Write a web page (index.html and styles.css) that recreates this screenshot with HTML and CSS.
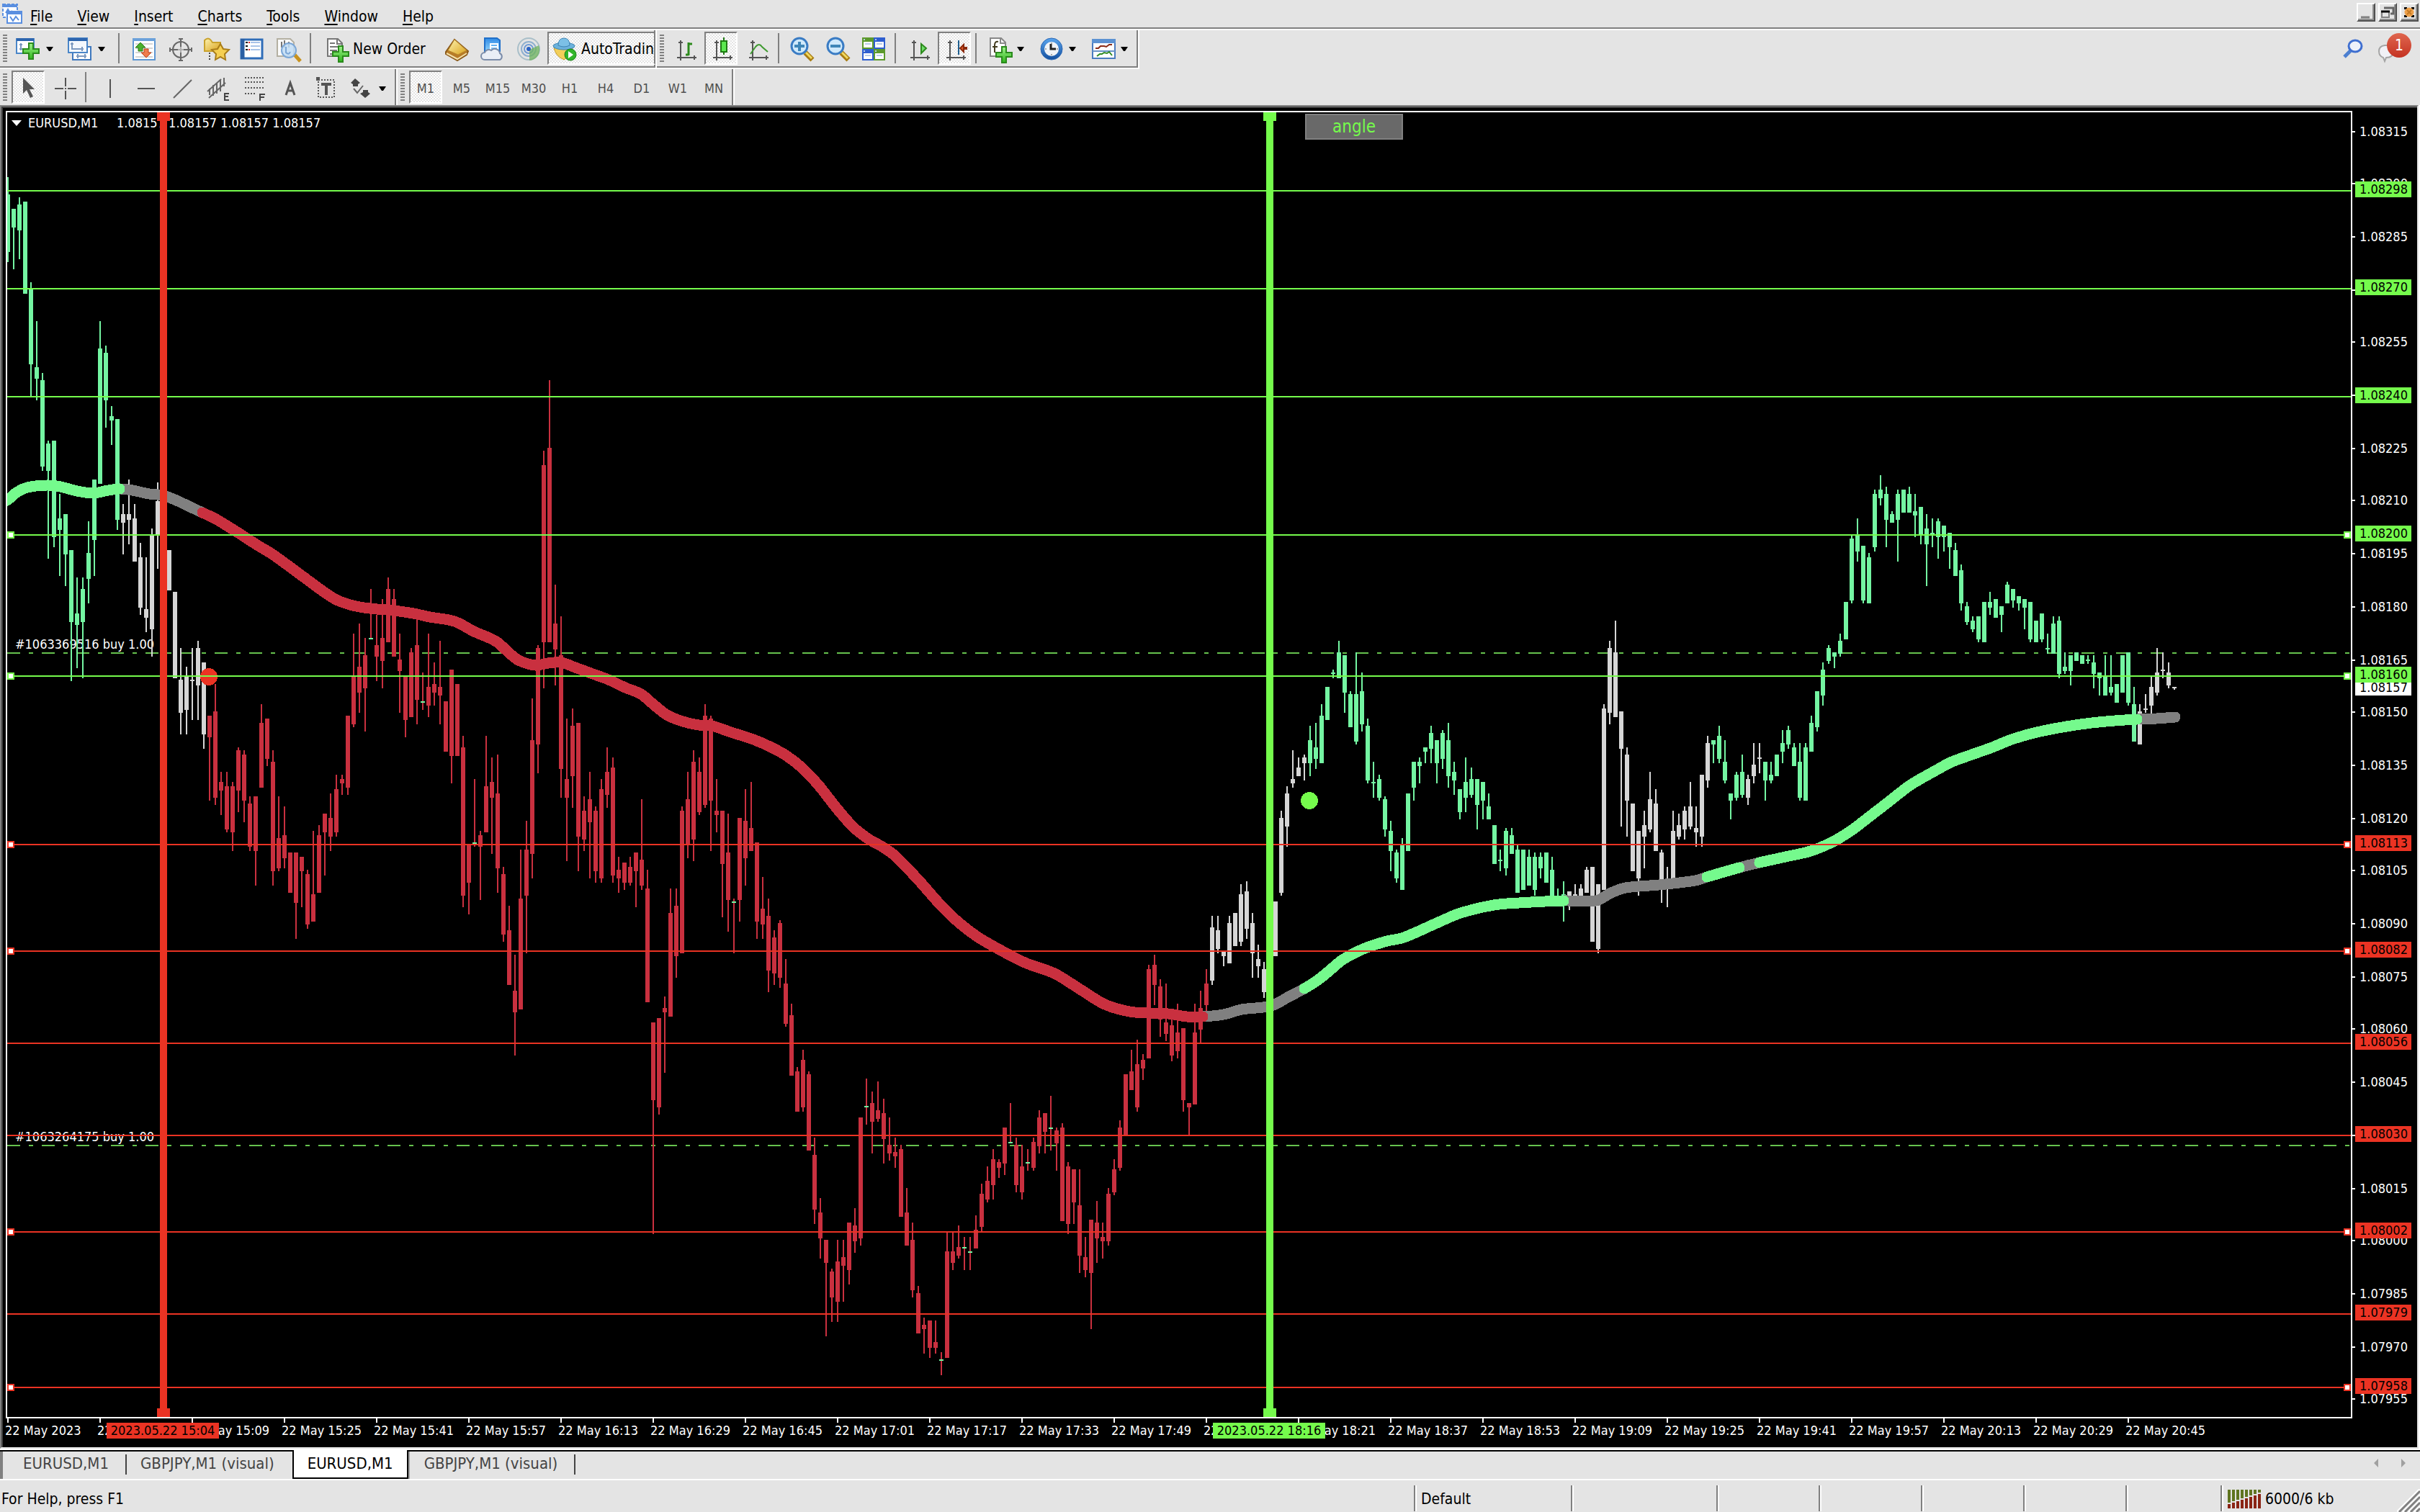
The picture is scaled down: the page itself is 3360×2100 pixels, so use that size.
FILE: index.html
```html
<!DOCTYPE html>
<html lang="en">
<head>
<meta charset="utf-8">
<title>EURUSD,M1</title>
<link rel="stylesheet" href="styles.css">
</head>
<body>
<svg class="defs" aria-hidden="true">
  <defs>
    <linearGradient id="plus" x1="0" y1="0" x2="0" y2="1"><stop offset="0" stop-color="#9df28a"/><stop offset="1" stop-color="#2fb51c"/></linearGradient>
    <linearGradient id="gold" x1="0" y1="0" x2="1" y2="1"><stop offset="0" stop-color="#fdf3b0"/><stop offset="1" stop-color="#d9a21c"/></linearGradient>
    <linearGradient id="sky" x1="0" y1="0" x2="0" y2="1"><stop offset="0" stop-color="#2f8ae6"/><stop offset="1" stop-color="#8fd3fb"/></linearGradient>
    <linearGradient id="clock" x1="0" y1="0" x2="0" y2="1"><stop offset="0" stop-color="#5aa5ee"/><stop offset="1" stop-color="#134f9f"/></linearGradient>
    <g id="axes" fill="none" stroke="#555" stroke-width="2"><path d="M10 4V32M5 28H32M7 7h6M29 25v6"/></g>
    <path id="green-plus" d="M18 6h6v8h8v6h-8v8h-6v-8h-8v-6h8z" fill="url(#plus)" stroke="#2a8a1c" stroke-width="2"/>
  </defs>
</svg>

<header class="menubar">
  <svg class="app-icon" viewBox="0 0 30 30" aria-hidden="true">
    <path d="M2 2h20v18H2z" fill="#fff" stroke="#5a8fe0" stroke-width="2" stroke-dasharray="4 2"/>
    <path d="M2 4h20" stroke="#5a8fe0" stroke-width="4"/><path d="M6 14l3-5 3 5 3-3" fill="none" stroke="#5a8fe0" stroke-width="2"/>
    <path d="M8 12h20v16H8z" fill="#fff" stroke="#5a8fe0" stroke-width="2"/><path d="M8 14h20" stroke="#5a8fe0" stroke-width="4"/>
    <path d="M12 19l4 6 4-6 4 5" fill="none" stroke="#5a8fe0" stroke-width="2"/>
  </svg>
  <nav class="menus">
    <button type="button"><u>F</u>ile</button><button type="button"><u>V</u>iew</button><button type="button"><u>I</u>nsert</button><button type="button"><u>C</u>harts</button><button type="button"><u>T</u>ools</button><button type="button"><u>W</u>indow</button><button type="button"><u>H</u>elp</button>
  </nav>
  <div class="window-buttons">
    <button type="button" aria-label="Minimize"><svg viewBox="0 0 22 22"><path d="M4 18h12" stroke="#808080" stroke-width="3"/></svg></button>
    <button type="button" aria-label="Restore"><svg viewBox="0 0 22 22"><path d="M6 5h13v8h-4" fill="none" stroke="#666" stroke-width="3"/><path d="M3 10h10v8H3z" fill="none" stroke="#808080" stroke-width="2"/><path d="M2 10h12" stroke="#000" stroke-width="3"/></svg></button>
    <button type="button" aria-label="Close"><svg viewBox="0 0 22 22"><path d="M4 4h4v3H4zM14 4h4v3h-4zM4 15h4v3H4zM14 15h4v3h-4z"/><circle cx="11" cy="11" r="6.500" fill="#eda04a"/><path d="M8 8l6 6M14 8l-6 6" stroke="#c57a24" stroke-width="2"/></svg></button>
  </div>
</header>

<div class="toolbar">
  <div class="group">
    <span class="grip"></span>
    <button type="button" class="tool drop" aria-label="New chart">
      <svg viewBox="0 0 32 32"><path d="M1 2h24v20H1z" fill="#fff" stroke="#4a86c8" stroke-width="2"/><path d="M1 3h24" stroke="#2d65ae" stroke-width="4"/><path d="M7 8v10M5 10h4M5 16h16" stroke="#7d9ac0" stroke-width="2"/><use href="#green-plus" y="2"/></svg><i></i>
    </button>
    <button type="button" class="tool drop" aria-label="Profiles">
      <svg viewBox="0 0 32 32"><path d="M7 13h25v18H7z" fill="#fff" stroke="#3f78bd" stroke-width="2"/><path d="M12 26h14M14 23v6M24 23v6" stroke="#7d9ac0" stroke-width="2"/><path d="M1 1h26v20H1z" fill="#f4f8fd" stroke="#4a86c8" stroke-width="2"/><path d="M1 3h26" stroke="#2d65ae" stroke-width="4"/><path d="M6 7v10M4 9h4M6 16h16M20 13v6" stroke="#7d9ac0" stroke-width="2"/></svg><i></i>
    </button>
    <span class="sep sep-wide"></span>
    <button type="button" class="tool" aria-label="Market Watch">
      <svg viewBox="0 0 32 32"><path d="M2 2h30v29H2z" fill="#fff" stroke="#5d96d2" stroke-width="2"/><path d="M1 3h32" stroke="#6ba1da" stroke-width="4"/><path d="M5 9h24M5 15h24M5 21h24M5 27h24" stroke="#d5d5d5" stroke-width="2"/><path d="M12 7l7 7h-4v5H9v-5H5z" fill="#4ab02e" stroke="#2a7d16"/><path d="M20 28l-7-7h4v-5h6v5h4z" fill="#ef7c4c" stroke="#bd4218"/></svg>
    </button>
    <button type="button" class="tool" aria-label="Data Window">
      <svg viewBox="0 0 32 32"><g fill="none" stroke="#686868" stroke-width="2"><circle cx="18" cy="17" r="11"/><path d="M18 2v11M18 21v11M3 17h11M22 17h11M15 2h6M15 32h6M3 14v6M33 14v6" /><path d="M18 13v8M14 17h8" stroke="#b0b0b0"/></g></svg>
    </button>
    <button type="button" class="tool" aria-label="Navigator">
      <svg viewBox="0 0 32 32"><path d="M1 4q5-5 9 0l2 3h11v12H1z" fill="url(#gold)" stroke="#c9a22c" stroke-width="2"/><path d="M8 21v10" stroke="#444" stroke-width="2" stroke-dasharray="2 2"/><path d="M23 9l4 7 8 1-6 6 1 8-7-4-7 4 1-8-6-6 8-1z" fill="#f5cf52" stroke="#a87c1a" stroke-width="2"/></svg>
    </button>
    <button type="button" class="tool" aria-label="Terminal">
      <svg viewBox="0 0 32 32"><path d="M2 3h29v26H2z" fill="#fff" stroke="#2f6db8" stroke-width="3"/><path d="M4 2v28" stroke="#2b5ea2" stroke-width="5"/><path d="M8 7h3M8 12h3M8 17h3" stroke="#111" stroke-width="2"/><path d="M12 7h2M12 17h2" stroke="#d22" stroke-width="2"/><path d="M15 7h13M15 12h13M15 17h13" stroke="#a8c3e8" stroke-width="2"/></svg>
    </button>
    <button type="button" class="tool" aria-label="Strategy Tester">
      <svg viewBox="0 0 32 32"><path d="M2 2h18l5 5v19H2z" fill="#fafafa" stroke="#b4b0a2" stroke-width="2"/><path d="M8 6v8M12 4v10M18 6v8" stroke="#777" stroke-width="2"/><path d="M26 24l8 9" stroke="#c8921e" stroke-width="5"/><circle cx="18" cy="18" r="10" fill="#bfdcf5" fill-opacity=".85" stroke="#7ba6d6" stroke-width="2"/><path d="M14 13v8q4 4 6-1" fill="none" stroke="#7ba6d6" stroke-width="2"/></svg>
    </button>
    <span class="sep sep-wide"></span>
    <button type="button" class="tool text order">
      <svg viewBox="0 0 32 32"><path d="M3 2h14l6 6v18H3z" fill="#fff" stroke="#777" stroke-width="2"/><path d="M16 2v7h7" fill="none" stroke="#777" stroke-width="2"/><path d="M6 8h7M6 13h12M6 18h10M6 23h8" stroke="#777" stroke-width="2"/><use href="#green-plus" y="6"/></svg>New Order
    </button>
    <button type="button" class="tool" aria-label="MetaEditor">
      <svg viewBox="0 0 32 32"><path d="M2 20L14 3l19 16-2 5-13 8L2 23z" fill="#b77b26" stroke="#8a5a1a" stroke-width="2"/><path d="M14 3l17 15-12 6L5 18z" fill="url(#gold)" stroke="#b8862a"/><path d="M3 22l15 8 13-8" fill="none" stroke="#f3dfa8" stroke-width="2"/></svg>
    </button>
    <button type="button" class="tool" aria-label="Virtual hosting">
      <svg viewBox="0 0 32 32"><path d="M6 1h17l4 3v15H6z" fill="url(#sky)" stroke="#1f6fc9" stroke-width="2"/><path d="M14 9h10v12H14zM14 13h10" fill="none" stroke="#fff" stroke-width="2"/><path d="M6 31a5 5 0 0 1 0-10 6 6 0 0 1 9-3 7 7 0 0 1 12 4 5 5 0 0 1 0 9z" fill="#e9eef6" stroke="#7b8ca9" stroke-width="2"/></svg>
    </button>
    <button type="button" class="tool" aria-label="Signals">
      <svg viewBox="0 0 32 32"><g fill="none" stroke-width="2"><circle cx="17" cy="16" r="15" stroke="#a9bfc9"/><circle cx="17" cy="16" r="10" stroke="#8fb0cf"/><circle cx="17" cy="16" r="6" stroke="#6f9bd4"/></g><path d="M18 17l13-6a15 15 0 0 1-13 21z" fill="#6db35c" fill-opacity=".75"/><circle cx="17" cy="16" r="3" fill="#2c62c4"/></svg>
    </button>
    <button type="button" class="tool text auto pressed">
      <svg viewBox="0 0 32 32"><path d="M2 14h26q-1 11-12 17Q4 26 2 14z" fill="#f2cf5a" stroke="#c49a2a"/><ellipse cx="16" cy="12" rx="15" ry="5" fill="#6cb2dc" stroke="#3d83b3"/><path d="M8 11q0-10 8-10t8 10q-8 4-16 0z" fill="#7cc0e6" stroke="#3d83b3"/><circle cx="25" cy="24" r="8" fill="#31b52a" stroke="#1c8317"/><path d="M22 19l7 5-7 5z" fill="#fff"/></svg>AutoTrading
    </button>
  </div>
  <div class="group">
    <span class="grip"></span>
    <button type="button" class="tool" aria-label="Bar Chart"><svg viewBox="0 0 32 32"><use href="#axes"/><path d="M21 7v18M21 9h5M17 24h4" fill="none" stroke="#2c8a1c" stroke-width="3"/></svg></button>
    <button type="button" class="tool pressed" aria-label="Candlesticks"><svg viewBox="0 0 32 32"><use href="#axes"/><path d="M20 0v24" stroke="#1e7a12" stroke-width="2"/><path d="M16 5h8v15h-8z" fill="#5ce850" stroke="#1e7a12" stroke-width="2"/></svg></button>
    <button type="button" class="tool" aria-label="Line Chart"><svg viewBox="0 0 32 32"><use href="#axes"/><path d="M7 23L14 13Q19 7 23 13l8 7" fill="none" stroke="#3f9a30" stroke-width="2"/></svg></button>
    <span class="sep"></span>
    <button type="button" class="tool" aria-label="Zoom In"><svg viewBox="0 0 32 32"><path d="M21 21l10 10" stroke="#a87c12" stroke-width="7"/><path d="M22 21l8 8" stroke="#f0d860" stroke-width="3"/><circle cx="13" cy="12" r="11" fill="#cfe9fb" stroke="#3a7cc4" stroke-width="3"/><path d="M13 6v13M6 12h14" stroke="#3f86b8" stroke-width="4"/></svg></button>
    <button type="button" class="tool" aria-label="Zoom Out"><svg viewBox="0 0 32 32"><path d="M21 21l10 10" stroke="#a87c12" stroke-width="7"/><path d="M22 21l8 8" stroke="#f0d860" stroke-width="3"/><circle cx="13" cy="12" r="11" fill="#cfe9fb" stroke="#3a7cc4" stroke-width="3"/><path d="M6 12h14" stroke="#3f86b8" stroke-width="4"/></svg></button>
    <button type="button" class="tool" aria-label="Tile Windows"><svg viewBox="0 0 32 32"><path d="M0 0h16v16H0zM16 16h16v16H16z" fill="#5c9a2c"/><path d="M16 0h16v16H16zM0 16h16v16H0z" fill="#2f5fd0"/><path d="M2 6h12v8H2zM18 6h12v8H18zM2 22h12v8H2zM18 22h12v8H18z" fill="#fff"/><path d="M4 9h8M20 9h8M4 25h8M20 25h8M2 3h2M18 3h2M2 19h2M18 19h2" stroke="#b9cce8" stroke-width="2"/></svg></button>
    <span class="sep"></span>
    <button type="button" class="tool" aria-label="Auto Scroll"><svg viewBox="0 0 32 32"><use href="#axes"/><path d="M20 9l7 6-7 7z" fill="#6fdc6a" stroke="#2c8a1c" stroke-width="2"/></svg></button>
    <button type="button" class="tool pressed" aria-label="Chart Shift"><svg viewBox="0 0 32 32"><use href="#axes"/><path d="M22 4v20" stroke="#1f5f8f" stroke-width="2"/><path d="M24 15l5-5v4h4v2h-4v4z" fill="#e05a2a" stroke="#8a2a0c" stroke-width="2"/></svg></button>
    <span class="sep"></span>
    <button type="button" class="tool drop" aria-label="Indicators"><svg viewBox="0 0 32 32"><path d="M5 1h15l6 6v19H5z" fill="#fff" stroke="#888" stroke-width="2"/><path d="M19 1v7h7" fill="none" stroke="#888" stroke-width="2"/><path d="M16 6q-5-1-5 5v10M8 13h7" fill="none" stroke="#443c20" stroke-width="2"/><use href="#green-plus" x="3" y="7"/></svg><i></i></button>
    <button type="button" class="tool drop" aria-label="Periods"><svg viewBox="0 0 32 32"><circle cx="18" cy="16" r="15" fill="url(#clock)" stroke="#2a67b4"/><circle cx="18" cy="16" r="10" fill="#f0f3f7"/><path d="M17 9v7h7" fill="none" stroke="#222" stroke-width="3"/><path d="M18 7v2M18 23v2M9 16h2M25 16h2" stroke="#aaa" stroke-width="2"/></svg><i></i></button>
    <button type="button" class="tool drop" aria-label="Templates"><svg viewBox="0 0 32 32"><path d="M3 3h31v26H3z" fill="#fff" stroke="#4a7cc0" stroke-width="2"/><path d="M2 5h33" stroke="#5c92d2" stroke-width="6"/><path d="M3 19h31" stroke="#6b94c8" stroke-width="2"/><path d="M7 15h4l3-3h5l3 1 4-3h4" fill="none" stroke="#8a2a16" stroke-width="2"/><path d="M9 26l4-3h3l3-2 4 1 3-2 4 5" fill="none" stroke="#2f8a22" stroke-width="2"/></svg><i></i></button>
  </div>
  <div class="right-tools">
    <button type="button" aria-label="Search"><svg class="search" viewBox="0 0 28 28"><path d="M12 16L3 25" stroke="#4c7fd0" stroke-width="5"/><ellipse cx="18" cy="10" rx="9" ry="8" fill="#eef1fa" stroke="#3f6fd0" stroke-width="3"/></svg></button>
    <button type="button" class="notice" aria-label="Notifications"><svg viewBox="0 0 26 26"><path d="M9 2q12-1 12 8t-10 9l-2 5-2-5Q1 17 1 10t8-8z" fill="#f1f1f6" stroke="#a5a5a5" stroke-width="2"/></svg><span>1</span></button>
  </div>
</div>

<div class="toolbar second">
  <div class="group">
    <span class="grip"></span>
    <button type="button" class="tool pressed" aria-label="Cursor"><svg viewBox="0 0 32 32"><path d="M9 1v22l5-5 5 11 4-2-5-10h7z" fill="#555"/></svg></button>
    <button type="button" class="tool" aria-label="Crosshair"><svg viewBox="0 0 32 32"><path d="M18 1v12M18 19v12M3 16h12M21 16h12M17 16h2" stroke="#555" stroke-width="2"/></svg></button>
    <span class="sep"></span>
    <button type="button" class="tool" aria-label="Vertical Line"><svg viewBox="0 0 32 32"><path d="M18 3v26" stroke="#555" stroke-width="2"/></svg></button>
    <button type="button" class="tool" aria-label="Horizontal Line"><svg viewBox="0 0 32 32"><path d="M6 16h24" stroke="#555" stroke-width="2"/></svg></button>
    <button type="button" class="tool" aria-label="Trendline"><svg viewBox="0 0 32 32"><path d="M6 29L31 4" stroke="#666" stroke-width="2"/></svg></button>
    <button type="button" class="tool" aria-label="Equidistant Channel"><svg viewBox="0 0 32 32"><path d="M3 20L22 3M5 29L28 8M6 16v9M11 11v15M16 8v15M21 4v16M26 1v12" fill="none" stroke="#666" stroke-width="2"/><path d="M33 23h-6v9h6M27 27h5" fill="none" stroke="#444" stroke-width="2"/></svg></button>
    <button type="button" class="tool" aria-label="Fibonacci Retracement"><svg viewBox="0 0 32 32"><path d="M5 1h27M5 7h27M5 15h27M5 23h15" stroke="#555" stroke-width="2" stroke-dasharray="2 2"/><path d="M26 33v-9h7M26 28h6" fill="none" stroke="#444" stroke-width="2"/></svg></button>
    <button type="button" class="tool" aria-label="Text"><svg viewBox="0 0 32 32"><path d="M12 25l6-17 6 17M14 19h8" fill="none" stroke="#555" stroke-width="3"/></svg></button>
    <button type="button" class="tool" aria-label="Text Label"><svg viewBox="0 0 32 32"><path d="M7 4h22v24H7z" fill="none" stroke="#555" stroke-width="2" stroke-dasharray="2 2"/><path d="M4 0h5v5H4z" fill="#555"/><path d="M11 10h14M18 10v15" stroke="#555" stroke-width="4"/></svg></button>
    <button type="button" class="tool drop" aria-label="Arrows"><svg viewBox="0 0 32 32"><path d="M9 2l7 6-3 2v3H6v-3L3 8zM23 29l7-6-3-2v-3h-7v3l-4 2z" fill="#444"/><path d="M7 16l5 6 8-10" fill="none" stroke="#666" stroke-width="2"/></svg><i></i></button>
  </div>
  <div class="group periods">
    <span class="grip"></span>
    <button type="button" class="tool pressed">M1</button><button type="button" class="tool">M5</button><button type="button" class="tool">M15</button><button type="button" class="tool">M30</button><button type="button" class="tool">H1</button><button type="button" class="tool">H4</button><button type="button" class="tool">D1</button><button type="button" class="tool">W1</button><button type="button" class="tool">MN</button>
  </div>
</div>

<main class="chart">
  <section class="plot">
    <p class="order-label" data-y="895">#1063369516 buy 1.00</p>
    <p class="order-label" data-y="1579">#1063264175 buy 1.00</p>
    <p class="symbol"><i></i><b>EURUSD,M1</b>1.08157 1.08157 1.08157 1.08157</p>
    <svg id="bars" viewBox="10 156 3254 1812" preserveAspectRatio="none" role="img" aria-label="EURUSD one minute candlesticks"></svg>
    <button type="button" class="angle">angle</button>
  </section>
  <aside id="prices" class="prices"></aside>
  <footer id="times" class="times"></footer>
</main>

<nav class="tabs">
  <button type="button">EURUSD,M1</button><button type="button">GBPJPY,M1 (visual)</button><button type="button" class="active">EURUSD,M1</button><button type="button">GBPJPY,M1 (visual)</button>
  <span class="scroll"><svg viewBox="0 0 44 12"><path d="M6 0v12L0 6zM38 0v12l6-6z" fill="#a0a0a0"/></svg></span>
</nav>

<footer class="status">
  <span class="help">For Help, press F1</span>
  <span class="cell profile">Default</span>
  <span class="cell open"></span>
  <span class="cell small"></span><span class="cell small"></span><span class="cell small"></span><span class="cell small"></span><span class="cell volume"></span>
  <span class="cell traffic"><svg viewBox="0 0 46 26"><path d="M2 0v18M8 0v16M14 0v14M20 0v12M26 0v10M32 0v8M38 0v6M44 0v4" stroke="#5f7420" stroke-width="4"/><path d="M2 20v6M8 18v8M14 16v10M20 14v12M26 12v14M32 10v16M38 8v18M44 6v20" stroke="#8a2414" stroke-width="4"/></svg>6000/6 kb</span>
  <svg class="size-grip" viewBox="0 0 32 32"><path d="M0 32L32 0M8 32L32 8M16 32L32 16M24 32l8-8" stroke="#fff" stroke-width="3"/><path d="M3 32L32 3M11 32l21-21M19 32l13-13M27 32l5-5" stroke="#808080" stroke-width="3"/></svg>
</footer>
<script src="chart.js"></script>
</body>
</html>
```
FILE: styles.css
```css
* { box-sizing: border-box; }
html, body { height: 100%; margin: 0; }
body {
  display: flex;
  flex-direction: column;
  background: #e4e4e4;
  color: #000;
  font-family: "DejaVu Sans Condensed", "DejaVu Sans", "Noto Sans", sans-serif;
  font-size: 21px;
  line-height: 26px;
  overflow: hidden;
}
button {
  margin: 0;
  padding: 0;
  border: 0;
  background: none;
  color: inherit;
  font: inherit;
}
p { margin: 0; }
svg { display: block; overflow: visible; }
.defs { position: absolute; width: 0; height: 0; }

/* Menu bar */
.menubar {
  display: flex;
  flex: none;
  height: 42px;
  padding: 4px 2px 0;
  border-bottom: 2px solid #fff;
  box-shadow: inset 0 -2px #808080;
}
.app-icon { width: 30px; height: 30px; }
.menus { display: flex; flex: 1; align-items: flex-start; padding-left: 10px; gap: 34px; }
.menus button { height: 34px; line-height: 38px; }
.menus u { text-underline-offset: 3px; text-decoration-thickness: 2px; }
.window-buttons { display: flex; gap: 4px; }
.window-buttons button {
  width: 26px;
  height: 26px;
  border: 2px solid;
  border-color: #fff #505050 #505050 #fff;
  box-shadow: inset -2px -2px #909090;
}
.window-buttons svg { width: 22px; height: 22px; }

/* Toolbars */
.toolbar {
  display: flex;
  flex: none;
  height: 54px;
}
.toolbar.second { height: 50px; }
.group {
  display: flex;
  align-items: center;
  flex: none;
  padding-left: 4px;
  border-right: 2px solid #fff;
  border-bottom: 2px solid #fff;
  box-shadow: inset -2px 0 #808080, inset 0 -2px #808080;
}
.toolbar:not(.second) .group { padding-bottom: 2px; }
.second .group:first-child { box-shadow: inset -2px 0 #808080; }
.second .group { border-bottom: 0; box-shadow: inset -2px 0 #808080; }
.grip {
  width: 6px;
  height: 38px;
  margin-right: 6px;
  background: repeating-linear-gradient(#808080 0 2px, transparent 2px 4px);
}
.sep { width: 2px; height: 42px; margin: 0 8px 0 2px; background: #808080; }
.sep-wide { margin: 0 10px 0 4px; }
.tool {
  display: flex;
  align-items: center;
  justify-content: center;
  flex: none;
  width: 46px;
  height: 46px;
  margin-right: 4px;
  padding-top: 2px;
  border: 2px solid transparent;
}
.tool svg { flex: none; width: 32px; height: 32px; }
.second .tool { padding-top: 4px; }
.drop { width: 68px; justify-content: flex-start; gap: 10px; padding-left: 4px; }
.drop i {
  width: 10px;
  height: 6px;
  background: #000;
  clip-path: polygon(0 0, 100% 0, 60% 100%, 40% 100%);
}
.pressed {
  border-color: #808080 #fff #fff #808080;
  background: repeating-conic-gradient(#fff 0 25%, #e4e4e4 0 50%) 0 0 / 4px 4px;
}
.text { justify-content: flex-start; gap: 6px; padding-left: 8px; white-space: nowrap; }
.order { width: 164px; }
.auto { width: 150px; margin-right: 0; padding-left: 5px; gap: 8px; overflow: hidden; border-right: 2px solid #808080; }
.periods .tool { color: #505050; font-size: 18px; }
.right-tools { display: flex; flex: 1; justify-content: flex-end; align-items: flex-start; gap: 22px; padding: 4px 12px 0 0; }
.search { width: 28px; height: 28px; margin-top: 8px; }
.notice { position: relative; width: 46px; height: 42px; }
.notice svg { width: 26px; height: 26px; margin-top: 14px; }
.notice span {
  position: absolute;
  top: 0;
  right: 0;
  width: 34px;
  height: 34px;
  border-radius: 50%;
  background: linear-gradient(#e0664f, #c43322);
  color: #fff;
  line-height: 34px;
  text-align: center;
}

/* Chart window */
.chart {
  display: grid;
  grid-template-columns: 1fr 90px;
  grid-template-rows: 1fr 40px;
  flex: 1;
  min-height: 0;
  margin-right: 2px;
  padding: 6px 0 0 6px;
  border: solid #808080;
  border-width: 2px 0 0 2px;
  border-right: 2px solid #e4e4e4;
  border-bottom: 2px solid #e4e4e4;
  background: #000;
  box-shadow: inset 2px 2px #404040, 2px 0 #fff;
  color: #fff;
  font-size: 18px;
  line-height: 22px;
}
.plot { position: relative; border: 2px solid #fff; }
.plot > svg { position: relative; width: 100%; height: 100%; overflow: hidden; }
.symbol, .order-label { position: absolute; white-space: nowrap; }
.symbol { top: 4px; left: 6px; display: flex; align-items: center; }
.symbol i { width: 14px; height: 8px; margin-right: 9px; background: #fff; clip-path: polygon(0 0, 100% 0, 50% 100%); }
.symbol b { width: 123px; font-weight: normal; }
.order-label { left: 11px; margin-top: -11px; }
.angle {
  position: absolute;
  top: 2px;
  left: 1802px;
  width: 136px;
  height: 36px;
  border: 2px solid #808080;
  background: #696969;
  color: #75fb4c;
  font-size: 24px;
  line-height: 32px;
}
.prices, .times { position: relative; }
.times { grid-column: 1 / -1; }
.prices span, .times span { position: absolute; white-space: nowrap; height: 22px; }
.prices span { left: 4px; width: 78px; margin-top: -10px; padding-left: 6px; }
.prices span::before {
  content: "";
  position: absolute;
  top: 10px;
  left: -4px;
  width: 4px;
  height: 2px;
  background: #fff;
}
.prices .tag { margin-top: -12px; color: #000; }
.prices .tag::before { display: none; }
.times span { top: 6px; margin-left: -4px; }
.times span:not(.tag)::before {
  content: "";
  position: absolute;
  top: -6px;
  left: 3px;
  width: 2px;
  height: 6px;
  background: #fff;
}
.times .tag { width: 156px; margin-left: 0; color: #000; text-align: center; }
.tag.up { background: #75fb4c; }
.tag.down { background: #eb3323; }
.tag.last { background: #fff; }

/* Chart tabs */
.tabs {
  display: flex;
  flex: none;
  height: 42px;
  border-top: 2px solid #fff;
  box-shadow: inset 0 2px #000, inset 4px 0 #808080;
  font-size: 22px;
}
.tabs button {
  position: relative;
  height: 38px;
  padding: 0 25px 0 19px;
  color: #444;
  line-height: 38px;
}
.tabs button:first-child { padding-left: 32px; }
.tabs button:first-child::after, .tabs button:nth-child(4)::after {
  content: "";
  position: absolute;
  top: 6px;
  right: 0;
  width: 2px;
  height: 28px;
  background: #444;
}
.tabs button:nth-child(4) { padding-left: 22px; }
.tabs .active {
  height: 40px;
  padding: 0 19px;
  border: 2px solid #000;
  border-top: 0;
  background: #fff;
  box-shadow: 2px 2px #a0a0a0;
  color: #000;
}
.scroll { margin: 12px 20px 0 auto; }
.scroll svg { width: 44px; height: 12px; }

/* Status bar */
.status {
  position: relative;
  display: flex;
  flex: none;
  align-items: center;
  height: 46px;
  padding-top: 6px;
  border-top: 2px solid #fff;
}
.help { flex: 1; padding: 2px 0 0 2px; }
.cell {
  display: flex;
  align-items: center;
  flex: none;
  height: 36px;
  padding: 2px 0 0 8px;
  border-left: 2px solid #808080;
  box-shadow: inset 2px 0 #fff;
}
.profile { width: 218px; }
.open { width: 202px; }
.small { width: 142px; }
.volume { width: 132px; }
.traffic { width: 277px; gap: 6px; }
.traffic svg { width: 46px; height: 26px; }
.size-grip { position: absolute; right: 0; bottom: 0; width: 32px; height: 32px; overflow: hidden; }
```
FILE: chart.js
```js
// Plot space: x runs 10..3264, y runs 156..1968. One bar every 8 units.
const GREEN = '#75fb4c', RED = '#eb3323';
const TREND = { up: '#74f5a2', down: '#c9303f', flat: '#d6d6d6' };

// Each run: base y, units per step, then [high, body top, body bottom, low] per bar.
const RUNS = [
  { y: 140, step: 1.742, bars: [
    [185,226,366,390],[261,261,307,408],[233,251,314,383],[244,244,467,467],[439,454,638,714],[533,645,672,725],[659,676,885,896],[822,829,896,1108],
    [822,822,1056,1080],[951,1010,1038,1150],[1000,1000,1098,1174],[1087,1087,1261,1404],[1153,1240,1268,1373],[1153,1181,1261,1397],[1017,1094,1157,1216],[916,916,1063,1150],
    [533,599,927,927],[592,610,725,791],[739,763,774,833],[770,770,1014,1038],[975,1000,1021,1098],[916,1000,1014,1073],[975,1010,1115,1115],[1070,1105,1227,1244],
    [1105,1230,1251,1286],[1035,1050,1278,1345],[923,969,1050,1132],[969,969,1087,1087],[1087,1087,1185,1185],[1188,1188,1397,1397],[1324,1401,1481,1533],[1369,1392,1474,1533],
    [1324,1401,1404,1498],[1307,1324,1415,1498],[1359,1359,1533,1568] ] },
  { y: 880, step: 1.823, bars: [
    [208,208,263,423],[128,197,416,434],[350,376,397,459],[350,387,496,503],[376,387,503,551],[288,295,397,452],[295,306,423,478],[412,430,540,551],
    [412,412,551,638],[179,226,390,390],[215,215,317,335],[295,325,602,638],[412,518,594,602],[438,511,569,594],[554,554,656,656],[554,554,682,773],
    [565,565,602,693],[598,609,737,748],[500,660,729,729],[485,511,656,656],[456,456,503,613],[405,467,514,551],[357,394,503,514],[357,368,379,408],
    [208,208,390,408],[0,107,230,237],[-25,84,150,201],[11,55,139,248],[-113,12,14,14],[-46,29,58,120],[-87,11,69,139],[-142,-113,22,22],
    [-113,-87,58,58],[0,66,95,201],[107,107,219,263],[36,47,211,211],[-41,29,168,230],[98,172,174,193],[0,135,182,211],[73,128,150,182],
    [18,135,157,230],[171,171,299,299],[91,91,310,379],[128,128,310,310],[259,288,664,693],[533,533,631,711],[368,530,532,540],[500,511,540,675],
    [259,387,503,503],[314,376,416,558],[306,405,594,656],[591,609,762,780],[689,751,890,890],[813,904,959,1068],[547,671,952,952],[474,547,664,810],
    [164,270,558,620],[29,36,281,354],[-462,-427,22,138],[-641,-470,22,22],[-123,-25,40,131],[-44,55,343,416],[215,368,416,576],[190,233,361,441],
    [226,226,514,602],[412,449,521,551],[350,419,478,620],[438,449,602,631],[368,394,620,631],[288,350,408,441],[314,339,613,631],[565,598,620,656],
    [580,580,631,649],[565,591,631,638],[554,554,602,693],[419,573,638,649],[598,645,934,934],[985,985,1181,1520],[974,974,1200,1218],[919,948,959,1112],
    [645,707,970,970],[645,689,817,872],[438,449,810,810],[350,419,533,569],[295,325,521,576],[314,350,452,459],[179,208,434,441],[208,215,423,551],
    [368,449,459,503],[449,449,583,718] ] },
  { y: 1000, step: 1.668, bars: [
    [217,307,417,490],[414,421,423,540],[227,227,417,467],[160,234,320,384],[143,250,304,304],[284,284,467,507],[364,437,474,507],[414,454,580,631],
    [487,504,587,614],[464,470,597,621],[554,611,704,711],[657,684,824,824],[804,814,907,907],[764,787,897,907],[814,821,998,998],[967,1008,1134,1168],
    [1108,1141,1201,1248],[1204,1204,1258,1428],[1271,1278,1338,1395],[1204,1254,1348,1395],[1204,1244,1264,1348],[1164,1164,1274,1308],[1131,1171,1208,1234],[921,921,1201,1218],
    [831,894,896,937],[861,887,931,1004],[837,904,924,931],[877,911,971,1028],[921,984,1004,1021],[967,1001,1011,1038],[984,994,1151,1151],[1084,1141,1218,1218],
    [1164,1204,1321,1338],[1311,1328,1421,1421],[1385,1401,1411,1468],[1391,1391,1455,1478],[1391,1441,1455,1468],[1465,1482,1484,1518],[1187,1231,1478,1478],[1187,1231,1258,1274],
    [1171,1221,1241,1248],[1198,1221,1223,1274],[1198,1231,1233,1274],[1148,1181,1224,1224],[1074,1098,1174,1184],[1034,1068,1111,1118],[994,1018,1078,1111],[1018,1024,1038,1061],
    [944,944,1028,1054],[887,978,980,980],[967,984,1078,1094],[984,1034,1094,1111],[994,1025,1027,1044],[967,977,1038,1044],[904,921,988,1004],[911,911,954,1004],
    [871,944,946,998],[944,951,981,1044],[934,944,1161,1161],[1024,1034,1168,1191],[1041,1041,1118,1168],[1041,1124,1241,1281],[1198,1244,1274,1291],[1158,1158,1281,1411],
    [1114,1164,1201,1258],[1164,1198,1208,1248],[1084,1098,1208,1218],[1018,1041,1094,1101],[927,944,1038,1044],[821,821,961,961],[764,814,857,857],[741,797,897,907],
    [774,787,807,834],[567,577,784,784],[544,567,614,661],[601,617,694,734],[611,701,727,744],[690,707,777,791],[657,724,767,784],[714,714,881,907],
    [887,887,897,961],[657,724,891,891],[627,667,717,747],[577,611,661,681],[454,480,604,614],[454,487,530,540],[537,537,547,570],[454,470,564,564],
    [447,447,524,524],[380,404,514,524],[374,397,484,507],[447,470,540,597],[520,554,570,597],[560,577,631,644],[547,547,631,631],[420,420,547,547] ] },
  { y: 850, step: 3, bars: [
    [828,858,1170,1182],[726,756,894,978],[576,696,714,732],[606,648,684,684],[594,606,630,702],[474,534,630,684],[462,564,612,654],[384,432,630,630],
    [312,312,450,450],[240,252,258,276],[120,168,276,276],[180,180,336,420],[330,342,480,480],[168,342,540,552],[252,330,468,498],[444,474,702,714],
    [624,708,714,774],[678,696,774,786],[768,780,906,936],[870,912,996,1080],[990,1002,1110,1128],[942,970,1158,1158],[756,756,996,996],[624,624,732,786],
    [606,624,642,714],[564,564,582,630],[474,504,570,630],[534,534,630,714],[492,504,612,654],[462,534,684,732],[624,666,702,762],[738,738,834,864],
    [606,708,774,834],[648,696,762,774],[696,696,804,906],[708,708,786,864],[756,810,864,864],[888,888,1050,1050],[990,1032,1038,1080],[900,912,1068,1098],
    [900,930,1008,1008],[972,990,1170,1170],[990,990,1158,1158],[990,1020,1140,1140],[1002,1020,1158,1182],[1002,1020,1068,1110],[1002,1002,1128,1128],[1020,1074,1190,1190],
    [1152,1185,1190,1200],[1122,1176,1200,1290],[1164,1164,1190,1242],[1134,1176,1190,1190],[1134,1152,1190,1190],[1062,1074,1170,1170],[1062,1062,1374,1374],[1134,1134,1404,1422],
    [384,402,1158,1158],[120,150,420,468],[36,168,438,438],[414,414,570,894],[564,594,786,936],[798,798,1080,1080],[912,912,1110,1182],[828,888,936,1068],
    [666,780,906,918],[738,798,996,996],[990,1002,1130,1212],[1062,1130,1136,1230],[828,912,1110,1110],[840,888,936,948],[810,828,906,948],[708,810,894,906],
    [810,900,918,978],[678,678,936,978],[516,546,702,732],[534,534,552,630],[474,516,612,630],[534,624,702,714],[756,756,786,864],[666,678,774,786],
    [594,666,762,774],[678,696,774,804],[546,636,684,714] ] },
  { y: 640, step: 3, bars: [
    [1176,1236,1242,1302],[1254,1254,1332,1416],[1254,1308,1332,1344],[1224,1224,1314,1314],[1122,1176,1212,1260],[1104,1122,1182,1200],[1176,1194,1272,1272],[1176,1254,1404,1416],
    [1176,1194,1416,1416],[1062,1092,1212,1212],[960,960,1110,1128],[840,870,978,1020],[768,780,834,846],[798,798,816,864],[720,750,804,816],[588,588,744,744],
    [312,324,582,594],[240,312,378,420],[354,354,582,594],[384,402,594,594],[120,138,360,378],[60,120,156,186],[108,138,246,360],[210,222,258,258],
    [120,138,246,420],[120,120,216,216],[108,138,216,216],[138,210,228,318],[192,192,306,348],[222,282,348,522],[240,300,306,360],[240,252,318,408],
    [270,270,318,378],[300,300,360,450],[342,372,480,480],[432,456,594,624],[588,606,672,684],[648,666,702,714],[648,648,744,756],[588,588,756,756],
    [546,588,612,642],[576,576,654,654],[606,606,642,714],[504,516,594,594],[534,534,582,612],[564,564,594,624],[576,576,612,702],[588,588,744,756],
    [666,666,756,756],[636,636,744,756],[720,780,786,804],[648,678,804,804],[648,666,888,906],[798,858,876,888],[810,810,876,936],[798,798,834,834],
    [810,810,846,846],[810,828,834,846],[810,840,888,948],[882,882,906,978],[810,900,978,978],[810,942,966,978],[930,930,1008,1008],[810,810,966,966],
    [798,798,1008,1020],[942,1014,1170,1170],[1014,1044,1182,1182],[972,1032,1038,1050],[900,942,1020,1056],[780,882,966,978],[798,870,876,906],[840,882,936,948],
    [942,942,948,954] ] }
];
// Last bar index of each colour stretch.
const STRETCHES = [[19,'up'],[34,'flat'],[208,'down'],[225,'flat'],[270,'up'],[295,'flat'],[301,'up'],[304,'flat'],[369,'up'],[376,'flat']];

// Moving average: one point list, and the x at which each colour ends.
const AVERAGE = '0,700 11,694 23,684 38,677 65,674 84,676 107,682 130,685 145,682 166,679 184,681 207,686 226,688 245,695 264,704 281,712 298,720 318,732 337,744 357,757 377,769 398,784 421,801 444,818 467,833 490,841 513,845 547,848 574,852 597,857 631,863 658,877 689,891 707,907 720,917 743,924 761,921 779,920 796,926 823,936 845,944 868,955 890,964 908,979 926,993 948,1002 970,1007 988,1008 1015,1017 1046,1027 1069,1037 1091,1049 1113,1066 1136,1090 1162,1123 1185,1149 1207,1166 1225,1176 1243,1189 1275,1222 1306,1257 1332,1282 1357,1301 1388,1319 1423,1337 1464,1352 1495,1371 1530,1393 1551,1401 1576,1406 1622,1408 1648,1412 1670,1412 1699,1409 1724,1402 1765,1397 1790,1384 1811,1373 1830,1361 1846,1348 1864,1333 1895,1317 1926,1307 1946,1303 1966,1295 1997,1281 2028,1268 2074,1257 2109,1254 2171,1251 2216,1251 2237,1240 2257,1233 2303,1229 2354,1223 2370,1218 2415,1205 2443,1198 2479,1190 2514,1182 2545,1169 2571,1153 2592,1137 2623,1113 2650,1092 2668,1081 2686,1071 2708,1059 2735,1049 2766,1038 2793,1027 2828,1017 2869,1009 2904,1004 2936,1001 2967,999 2994,998 3020,996'
  .split(' ').map(p => p.split(',').map(Number));
const SHADES = [[166,'up'],[281,'flat'],[1670,'down'],[1811,'flat'],[2171,'up'],[2370,'flat'],[2415,'up'],[2443,'flat'],[2967,'up'],[3020,'flat']];
const SHADE = { up: '#75fa8d', down: '#c9303f', flat: '#808080' };

// Level lines: y, price, direction, selected
const LEVELS = [
  [264, '1.08298', 'up', 0], [400, '1.08270', 'up', 0], [550, '1.08240', 'up', 0], [742, '1.08200', 'up', 1], [938, '1.08160', 'up', 1],
  [1172, '1.08113', 'down', 1], [1320, '1.08082', 'down', 1], [1448, '1.08056', 'down', 0], [1576, '1.08030', 'down', 0],
  [1710, '1.08002', 'down', 1], [1824, '1.07979', 'down', 0], [1926, '1.07958', 'down', 1]
];

const rect = (x, y, w, h, fill) => `<rect x="${x}" y="${y}" width="${w}" height="${h}" fill="${fill}"/>`;
const even = v => Math.round(v / 2) * 2;

let art = '';
for (const y of [906, 1590]) {
  art += `<path d="M10 ${y + 1}H3264" stroke="#66c24e" stroke-width="2" stroke-dasharray="18 12 6 12"/>`;
}
let index = 0;
for (const run of RUNS) {
  for (const bar of run.bars) {
    const [high, top, bottom, low] = bar.map(v => even(run.y + v / run.step));
    const trend = STRETCHES.find(s => index <= s[0])[1];
    const x = 8 + index * 8;
    const doji = trend === 'down' && bar[2] - bar[1] === 2;
    art += rect(x + 2, high, 2, Math.max(2, low - high), TREND[trend]);
    art += rect(x, top, 6, Math.max(2, bottom - top), TREND[doji ? 'up' : trend]);
    index++;
  }
}

// Smooth curve through the average's points, cut where the colour changes.
const curves = SHADES.map(([, kind]) => ({ kind, d: '' }));
let part = 0;
for (let i = 0; i < AVERAGE.length - 1; i++) {
  const p0 = AVERAGE[Math.max(0, i - 1)], p1 = AVERAGE[i], p2 = AVERAGE[i + 1], p3 = AVERAGE[Math.min(AVERAGE.length - 1, i + 2)];
  if (p1[0] >= SHADES[part][0]) part++;
  if (!curves[part].d) curves[part].d = 'M' + p1;
  const third = (p2[0] - p1[0]) / 3;
  const slope1 = (p2[1] - p0[1]) / (p2[0] - p0[0]), slope2 = (p3[1] - p1[1]) / (p3[0] - p1[0]);
  curves[part].d += `C${p1[0] + third} ${p1[1] + third * slope1} ${p2[0] - third} ${p2[1] - third * slope2} ${p2}`;
}
curves.sort((a, b) => (b.kind === 'flat') - (a.kind === 'flat'));
for (const { kind, d } of curves) {
  art += `<path d="${d}" fill="none" stroke="${SHADE[kind]}" stroke-width="15" stroke-linejoin="round" stroke-linecap="round"/>`;
}
art += `<circle cx="290" cy="940" r="12" fill="${RED}"/><circle cx="1818" cy="1112" r="12" fill="${GREEN}"/>`;
for (const [y, , side, selected] of LEVELS) {
  const color = side === 'up' ? GREEN : RED;
  art += rect(10, y, 3254, 2, color);
  if (selected) {
    for (const x of [10, 3254]) art += rect(x, y - 4, 10, 10, color) + rect(x + 2, y - 2, 6, 6, '#fff');
  }
}
for (const [x, color] of [[222, RED], [1758, GREEN]]) {
  art += rect(x, 156, 10, 1812, color) + rect(x - 4, 156, 18, 12, color) + rect(x - 4, 1956, 18, 12, color);
}
document.getElementById('bars').innerHTML = `<g shape-rendering="crispEdges">${art}</g>`;

// Price scale
const prices = document.getElementById('prices');
const topOf = y => (y - 154) / 1816 * 100;
const price = (y, text, kind) => prices.insertAdjacentHTML('beforeend', `<span class="${kind}" style="top:${topOf(y)}%">${text}</span>`);
for (let i = 0; i < 25; i++) price(Math.floor((182 + i * 73.4) / 2) * 2, (1.08315 - i * 0.00015).toFixed(5), '');
price(956, '1.08157', 'tag last');
for (const [y, text, side] of LEVELS) price(y, text, 'tag ' + side);

// Time scale
const times = document.getElementById('times');
const leftOf = x => (x - 8) / 3348 * 100;
const time = (x, text, kind) => times.insertAdjacentHTML('beforeend', `<span class="${kind}" style="left:${leftOf(x)}%">${text}</span>`);
for (let i = 0; i < 24; i++) {
  const minutes = 14 * 60 + 37 + i * 16;
  const clock = Math.floor(minutes / 60) + ':' + String(minutes % 60).padStart(2, '0');
  time(11 + i * 128, i ? '22 May ' + clock : '22 May 2023', '');
}
time(148, '2023.05.22 15:04', 'tag down');
time(1684, '2023.05.22 18:16', 'tag up');

for (const label of document.querySelectorAll('.order-label')) {
  label.style.top = (label.dataset.y - 156) / 1812 * 100 + '%';
}
```
